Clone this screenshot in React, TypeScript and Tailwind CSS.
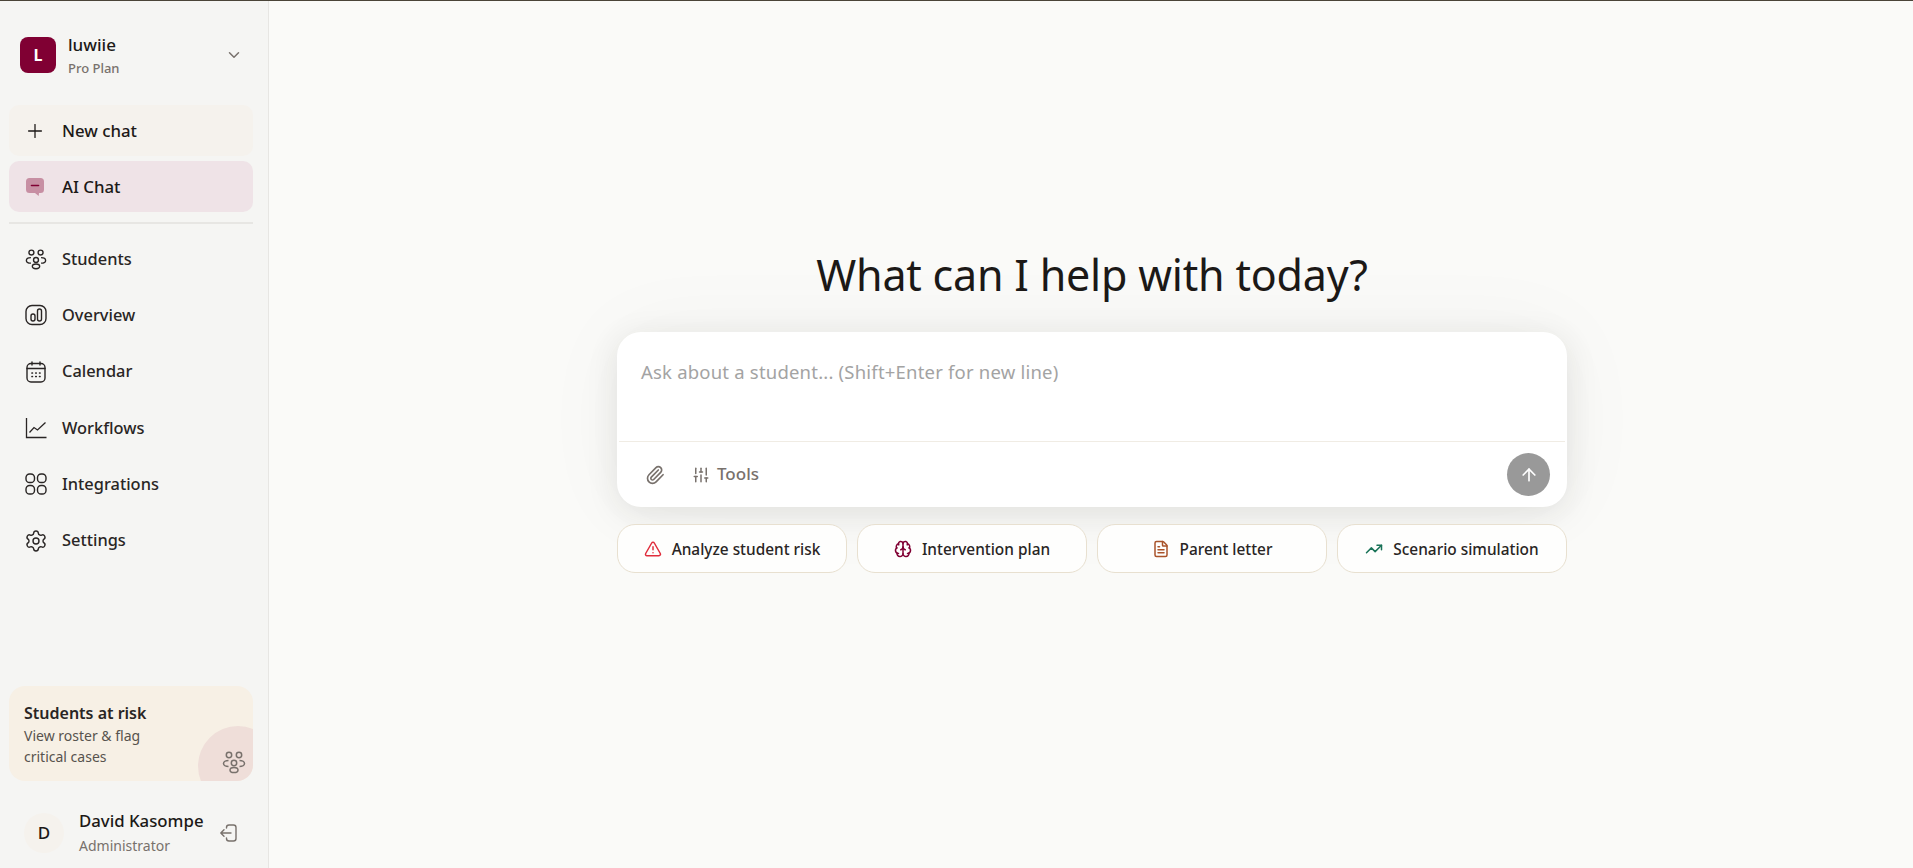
import { ArrowUp, Brain, ChevronDown, FileText, Paperclip, Plus, Settings, SlidersVertical, TrendingUp, TriangleAlert } from 'lucide-react';

const font = "font-['Noto_Sans','Open_Sans',sans-serif]";

function PeopleIcon({ className = '' }: { className?: string }) {
  return (
    <svg viewBox="0 0 24 24" fill="none" stroke="currentColor" strokeWidth="1.5" className={className}>
      <circle cx="7" cy="5" r="2.7" />
      <circle cx="17" cy="5" r="2.7" />
      <circle cx="12" cy="13" r="2.7" />
      <ellipse cx="12" cy="20" rx="4" ry="2.6" />
      <path d="M6.5 10.5C3.5 10.5 1.5 12 1.5 13.5S3.5 16.5 6.5 16.5" />
      <path d="M17.5 10.5C20.5 10.5 22.5 12 22.5 13.500S20.500 16.500 17.500 16.500" />
    </svg>
  );
}

function OverviewIcon({ className = '' }: { className?: string }) {
  return (
    <svg viewBox="0 0 24 24" fill="none" stroke="currentColor" strokeWidth="1.4" className={className}>
      <rect x="2" y="2.500" width="20" height="19" rx="6" />
      <rect x="7" y="11" width="4" height="7" rx="2" />
      <rect x="13.500" y="6" width="4" height="12" rx="2" />
    </svg>
  );
}

function CalendarIcon({ className = '' }: { className?: string }) {
  return (
    <svg viewBox="0 0 24 24" fill="none" stroke="currentColor" strokeWidth="1.4" strokeLinecap="round" className={className}>
      <rect x="3" y="3.500" width="18" height="18.500" rx="4" />
      <path d="M3 8.500h18M8 2v3M16 2v3" />
      <path d="M8 13h.4M11.800 13h.4M15.600 13h.4M8 16.500h.4M11.800 16.500h.4M15.600 16.500h.4" strokeWidth="1.700" />
    </svg>
  );
}

function WorkflowsIcon({ className = '' }: { className?: string }) {
  return (
    <svg viewBox="0 0 24 24" fill="none" stroke="currentColor" strokeWidth="1.300" className={className}>
      <path d="M2.500 2v19.500h20" />
      <path d="M5.500 16.500 10 11.500l3.500 2.500 8-7.500" />
    </svg>
  );
}

function GridIcon({ className = '' }: { className?: string }) {
  return (
    <svg viewBox="0 0 24 24" fill="none" stroke="currentColor" strokeWidth="1.400" className={className}>
      <rect x="2" y="2" width="8.500" height="8.500" rx="3.600" />
      <rect x="13.500" y="2" width="8.500" height="8.500" rx="3.600" />
      <rect x="2" y="13.500" width="8.500" height="8.500" rx="3.600" />
      <rect x="13.500" y="13.500" width="8.500" height="8.500" rx="3.600" />
    </svg>
  );
}

function ChatIcon() {
  return (
    <svg viewBox="0 0 20 20" className="h-[20px] w-[20px]">
      <path d="M4.500 1h11A3.500 3.500 0 0 1 19 4.500v8a3.500 3.500 0 0 1-3.500 3.500H14l-.3 3-3.700-3H4.500A3.500 3.500 0 0 1 1 12.500v-8A3.500 3.500 0 0 1 4.500 1Z" fill="#c78fa3" />
      <path d="M6.500 8.500h7" stroke="#800033" strokeWidth="1.600" strokeLinecap="round" />
    </svg>
  );
}

function LogoutIcon() {
  return (
    <svg viewBox="0 0 20 20" fill="none" stroke="#78716c" strokeWidth="1.400" strokeLinecap="round" strokeLinejoin="round" className="h-[20px] w-[20px]">
      <path d="M7.500 5V4.500A2.500 2.500 0 0 1 10 2h4.500A2.500 2.500 0 0 1 17 4.500v11a2.500 2.500 0 0 1-2.500 2.500H10a2.500 2.500 0 0 1-2.500-2.500V15" />
      <path d="M12 10H2M5 6.800 1.800 10 5 13.200" />
    </svg>
  );
}

const navIcon = 'h-[24px] w-[24px]';

const navItems = [
  { label: 'Students', icon: <PeopleIcon className="h-[22px] w-[22px]" /> },
  { label: 'Overview', icon: <OverviewIcon className={navIcon} /> },
  { label: 'Calendar', icon: <CalendarIcon className={navIcon} /> },
  { label: 'Workflows', icon: <WorkflowsIcon className={navIcon} /> },
  { label: 'Integrations', icon: <GridIcon className={navIcon} /> },
  { label: 'Settings', icon: <Settings className={navIcon} strokeWidth={1.400} /> },
];

const chips = [
  { label: 'Analyze student risk', icon: <TriangleAlert className="h-[18px] w-[18px] text-[#e02d3c]" strokeWidth={2} /> },
  { label: 'Intervention plan', icon: <Brain className="h-[18px] w-[18px] text-[#800033]" strokeWidth={2} /> },
  { label: 'Parent letter', icon: <FileText className="h-[18px] w-[18px] text-[#a9532a]" strokeWidth={2} /> },
  { label: 'Scenario simulation', icon: <TrendingUp className="h-[18px] w-[18px] text-[#1a7358]" strokeWidth={2} /> },
];

export default function App() {
  return (
    <div className={`flex h-screen overflow-hidden border-t border-[#4a4438] bg-[#fafaf8] text-[#1c1917] ${font}`}>
      <aside className="flex w-[269px] shrink-0 flex-col border-r border-[#e7e6e3] bg-[#f5f5f3] pl-[9px] pr-[15px]">
        <div className="flex items-center pl-[11px] pr-[10px] pt-[32px]">
          <div className="flex h-[36px] w-[36px] items-center justify-center rounded-[8px] bg-[#800033] text-[16px] font-bold text-white">L</div>
          <div className="ml-[12px] flex-1">
            <div className="text-[17px] font-medium leading-[24px]">luwiie</div>
            <div className="pt-[2px] text-[13px] font-medium leading-[18px] text-[#78716c]">Pro Plan</div>
          </div>
          <ChevronDown className="h-[18px] w-[18px] text-[#78716c]" strokeWidth={2} />
        </div>

        <button className="mt-[28px] flex h-[51px] items-center gap-[17px] rounded-[10px] bg-[#f5f2ed] pl-[16px] text-[16.800px] font-medium">
          <span className="flex w-[20px] justify-center"><Plus className="h-[22px] w-[22px] shrink-0" strokeWidth={1.400} /></span>
          New chat
        </button>
        <button className="mt-[5px] flex h-[51px] items-center gap-[17px] rounded-[10px] bg-[#efe3e7] pl-[16px] text-[16.800px] font-medium">
          <ChatIcon />
          AI Chat
        </button>
        <div className="mt-[10px] h-[2px] bg-[#e7e6e3]" />

        <nav className="mt-[7px] flex flex-col">
          {navItems.map(item => (
            <div key={item.label} className="flex h-[56.300px] items-center text-[16.400px] font-medium text-[#292524]">
              <span className="flex w-[53px] justify-center">{item.icon}</span>
              {item.label}
            </div>
          ))}
        </nav>

        <div className="relative mt-auto h-[95px] overflow-hidden rounded-[16px] bg-[#f7f0e5] px-[15px] pt-[15px]">
          <div className="text-[16px] font-semibold leading-[24px] text-[#292524]">Students at risk</div>
          <div className="text-[14px] leading-[21px] text-[#57534e]">View roster &amp; flag<br />critical cases</div>
          <div className="absolute left-[189px] top-[40px] h-[80px] w-[80px] rounded-full bg-[#efded9]" />
          <PeopleIcon className="absolute left-[213px] top-[64px] h-[24px] w-[24px] text-[#78716c]" />
        </div>

        <div className="flex h-[87px] items-center pl-[15px] pr-[14px] pt-[16px]">
          <div className="flex h-[40px] w-[40px] items-center justify-center rounded-full bg-[#f5f2ed] text-[17px] font-medium">D</div>
          <div className="ml-[15px] flex-1">
            <div className="text-[16.800px] font-medium leading-[24px]">David Kasompe</div>
            <div className="pt-[2px] text-[14px] leading-[22px] text-[#78716c]">Administrator</div>
          </div>
          <LogoutIcon />
        </div>
      </aside>

      <main className="flex flex-1 flex-col items-center pl-[2px] pt-[244px]">
        <h1 className="text-center text-[43px] font-normal leading-[60px] tracking-[-0.2px] text-[#1c1917]">What can I help with today?</h1>
        <div className="mt-[27px] w-[950px] rounded-[24px] bg-white shadow-[0_6px_32px_rgba(40,35,30,0.1),0_0_90px_rgba(40,35,30,0.04)]">
          <div className="h-[109px] px-[24px] pt-[27px] text-[18.500px] leading-[26px] tracking-[0.2px] text-[#a3a3a3]">Ask about a student... (Shift+Enter for new line)</div>
          <div className="mx-[2px] flex h-[66px] items-center border-t border-[#f0ece4] pl-[26px] pr-[15px]">
            <Paperclip className="h-[20px] w-[20px] text-[#78716c]" strokeWidth={2} />
            <SlidersVertical className="ml-[27px] h-[18px] w-[18px] text-[#78716c]" strokeWidth={2} />
            <span className="ml-[7px] pb-[2px] text-[17px] font-medium text-[#78716c]">Tools</span>
            <button className="ml-auto flex h-[43px] w-[43px] items-center justify-center rounded-full bg-[#999999] text-white">
              <ArrowUp className="h-[20px] w-[20px]" strokeWidth={2} />
            </button>
          </div>
        </div>
        <div className="mt-[17px] grid w-[950px] grid-cols-4 gap-[10px]">
          {chips.map(chip => (
            <button key={chip.label} className="flex h-[49px] items-center justify-center gap-[10px] rounded-[18px] border border-[#e8e0d0] bg-[#fefefd] text-[15.400px] font-medium text-[#292524]">
              {chip.icon}
              <span className="pt-[2px]">{chip.label}</span>
            </button>
          ))}
        </div>
      </main>
    </div>
  );
}
